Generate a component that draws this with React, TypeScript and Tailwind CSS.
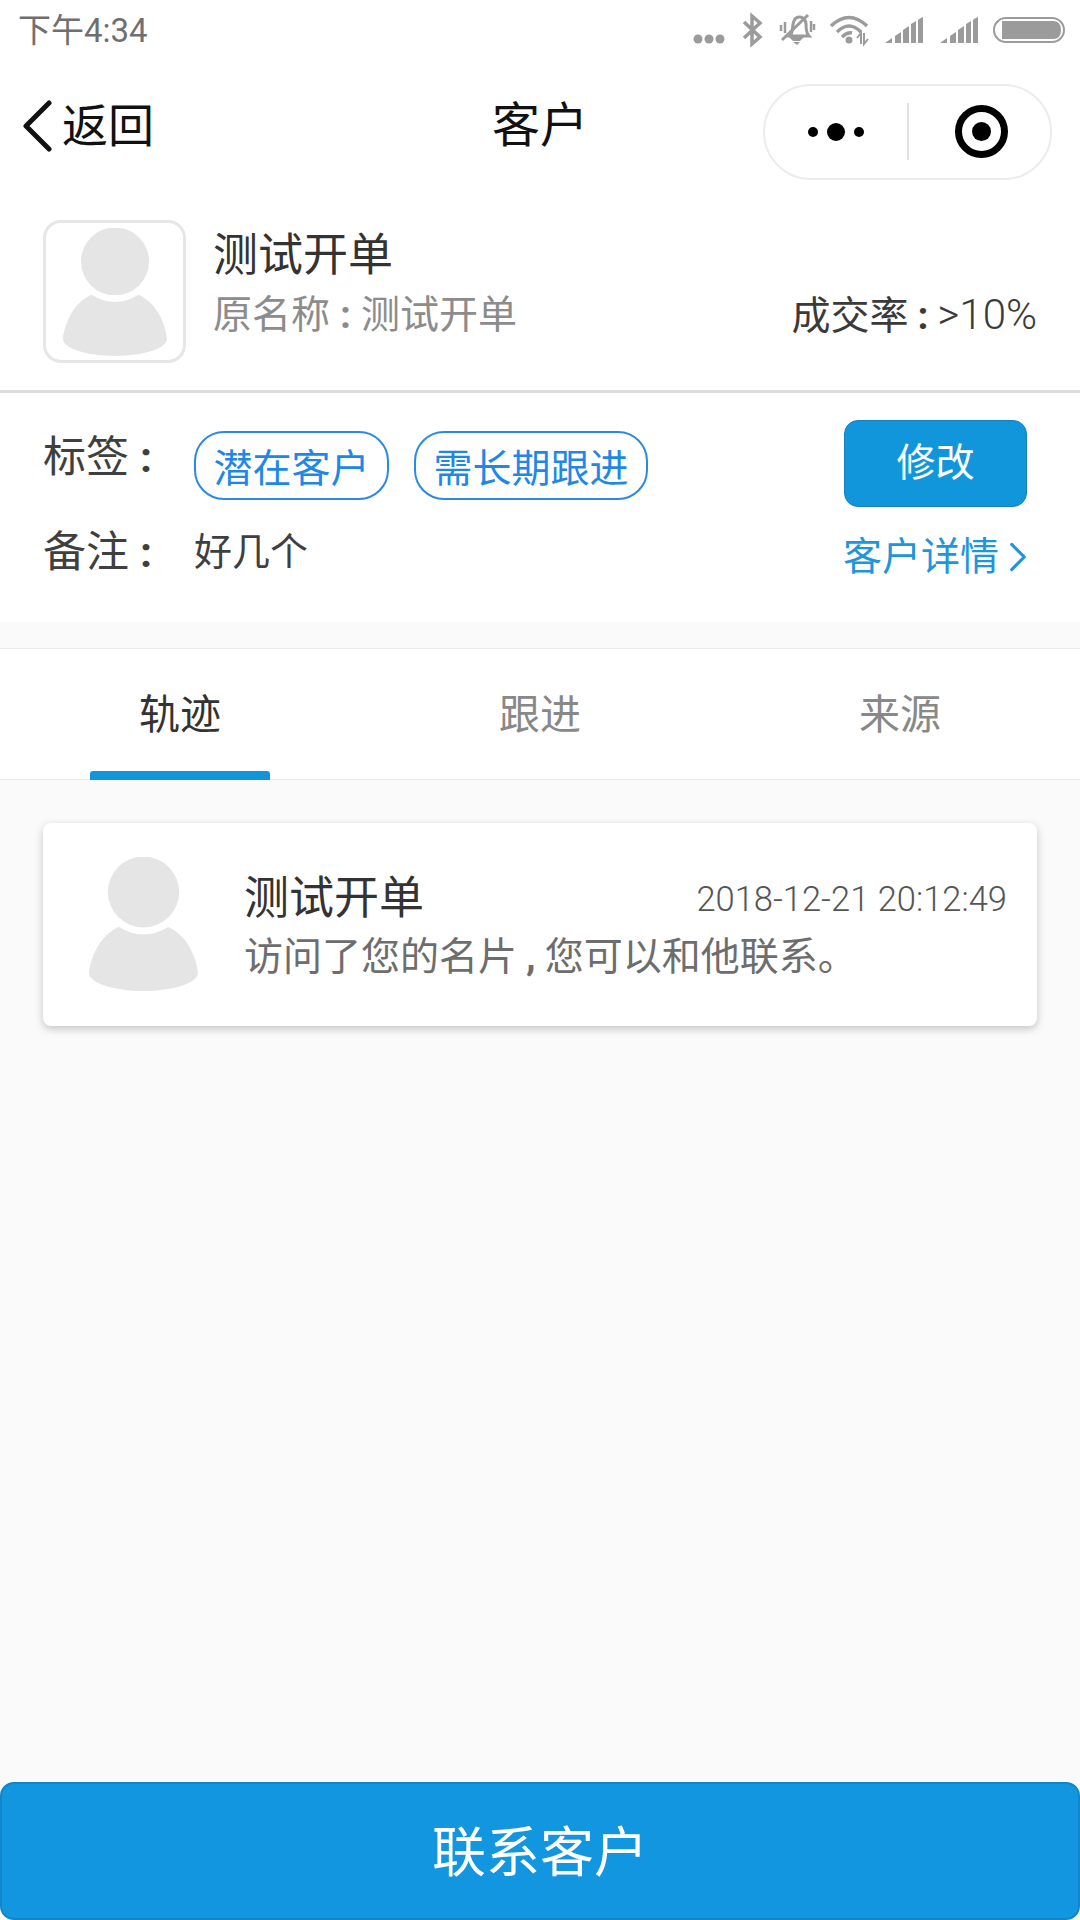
const FONT = "font-['Roboto','Noto_Sans_CJK_SC',sans-serif]";

const PersonIcon = ({ className }: { className: string }) => (
  <svg viewBox="0 0 110 134" preserveAspectRatio="none" className={className} fill="#e5e5e5">
    <ellipse cx="55" cy="35" rx="36" ry="35.5" />
    <path d="M30 70 Q55 85 80 70 C98 78 108 98 110 116 C110 126 85 134 55 134 C25 134 0 126 0 116 C2 98 12 78 30 70 Z" />
  </svg>
);

const SignalBars = ({ x }: { x: number }) => (
  <g transform={`translate(${x} 0)`} fill="#9b9b9b">
    <path d="M0 43 L7 38 V43 Z M10 43 V36 L16 32 V43 Z M18 43 V30 L24 26 V43 Z M26 43 V24 L31 21 V43 Z M33 43 V20 Q35 18 38 17 V43 Z" />
  </g>
);

const StatusBar = () => (
  <div className="flex h-[60px] items-center justify-between pl-[18px] pr-[14px] text-[#6f6f6f]">
    <span className="text-[33px] leading-none">下午4:34</span>
    <svg viewBox="692 0 374 60" className="h-[60px] w-[374px]" fill="#9b9b9b">
      <circle cx="698" cy="39" r="4.5" />
      <circle cx="708" cy="39" r="4.5" transform="translate(1 0)" />
      <circle cx="720" cy="39" r="4.5" />
      <path d="M744 22 L760 37 L752 44 V16 L760 23 L744 38" fill="none" stroke="#9b9b9b" strokeWidth="3.5" />
      <path d="M790 36 C794 32 791 22 796 18 C801 15 806 19 806 24 C806 30 807 34 809 36 Z" fill="none" stroke="#9b9b9b" strokeWidth="3" />
      <path d="M789 37 H804 L800 41 H793 Z M793 42 H800 L797 45 Z" />
      <path d="M782 40 L808 15" stroke="#9b9b9b" strokeWidth="3" />
      <path d="M785 22 V33 M781 25 V31 M811 21 V32 M814 24 V30" stroke="#9b9b9b" strokeWidth="2.5" />
      <path d="M831 26 Q849 9 867 26 M837 32 Q849 20 861 32 M842 37 Q847 32 852 33" fill="none" stroke="#9b9b9b" strokeWidth="3.5" />
      <circle cx="849" cy="40" r="3.5" />
      <path d="M861 44 V33 L857 38 M864 33 V44 L868 39" fill="none" stroke="#9b9b9b" strokeWidth="2" />
      <SignalBars x={885} />
      <SignalBars x={940} />
      <rect x="994" y="18" width="70" height="24" rx="12" fill="none" stroke="#9b9b9b" strokeWidth="2" />
      <path d="M1002 21 H1053 Q1061 21 1061 30 Q1061 39 1053 39 H1002 Z" />
    </svg>
  </div>
);

const NavBar = () => (
  <div className="relative flex h-[132px] items-center justify-between pl-[22px] pr-[28px]">
    <div className="flex items-center text-[#111]">
      <svg viewBox="0 0 30 52" className="h-[52px] w-[30px]" fill="none" stroke="#111" strokeWidth="5" strokeLinecap="round" strokeLinejoin="round">
        <path d="M27 3 L4 26 L27 49" />
      </svg>
      <span className="ml-[10px] text-[46px] leading-none">返回</span>
    </div>
    <span className="absolute left-1/2 -translate-x-1/2 text-[48px] leading-none text-[#111]">客户</span>
    <div className="mt-[11px] flex h-[96px] w-[289px] items-center rounded-full border-2 border-[#ececec]">
      <div className="flex w-[142px] items-center justify-center gap-[9px]">
        <span className="h-[10px] w-[10px] rounded-full bg-black" />
        <span className="h-[18px] w-[18px] rounded-full bg-black" />
        <span className="h-[10px] w-[10px] rounded-full bg-black" />
      </div>
      <div className="h-[57px] w-[2px] bg-[#e2e2e2]" />
      <div className="flex flex-1 items-center justify-center pl-[3px]">
        <div className="flex h-[53px] w-[53px] items-center justify-center rounded-full border-[7px] border-black">
          <span className="h-[19px] w-[19px] rounded-full bg-black" />
        </div>
      </div>
    </div>
  </div>
);

const Profile = () => (
  <div className="flex h-[201px] items-start border-b-[3px] border-[#dcdcdc] pl-[43px] pr-[43px] pt-[28px]">
    <div className="flex h-[143px] w-[143px] items-center justify-center rounded-[18px] border-[3px] border-[#e6e6e6]">
      <PersonIcon className="h-[128px] w-[104px]" />
    </div>
    <div className="ml-[27px] flex-1 pt-[8px]">
      <div className="text-[45px] leading-[56px] text-[#333]">测试开单</div>
      <div className="mt-[9px] text-[39px] leading-[44px] text-[#8c8c8c]">
        原名称<span className="mx-[10px] font-bold">:</span>测试开单
      </div>
    </div>
    <div className="self-start pt-[73px] text-[39px] leading-[44px] text-[#3a3a3a]">
      成交率<span className="mx-[9px] font-bold">:</span><span className="text-[42px] font-light">&gt;10%</span>
    </div>
  </div>
);

const Tag = ({ label, w }: { label: string; w: string }) => (
  <span className={`flex h-[69px] items-center justify-center rounded-[30px] border-2 border-[#2a8ae0] pt-[8px] text-[39px] leading-none text-[#1f88e5] ${w}`}>
    {label}
  </span>
);

const InfoSection = () => (
  <div className="flex h-[229px] justify-between pl-[43px] pr-[53px] pt-[28px]">
    <div>
      <div className="flex items-start">
        <span className="w-[151px] pt-[11px] text-[43px] leading-[50px] text-[#3f3f3f]">
          标签<span className="ml-[11px] font-bold">:</span>
        </span>
        <div className="mt-[4px] flex gap-[25px] pt-[6px]">
          <Tag label="潜在客户" w="w-[195px]" />
          <Tag label="需长期跟进" w="w-[234px]" />
        </div>
      </div>
      <div className="mt-[27px] flex items-center">
        <span className="w-[151px] text-[43px] leading-[50px] text-[#3f3f3f]">
          备注<span className="ml-[11px] font-bold">:</span>
        </span>
        <span className="text-[38px] leading-[50px] text-[#3f3f3f]">好几个</span>
      </div>
    </div>
    <div className="flex flex-col items-end">
      <button className="-mt-px h-[87px] w-[183px] rounded-[14px] border border-[#1a7fbd] bg-[#1296db] text-[39px] leading-none text-white">修改</button>
      <div className="mt-[27px] flex items-center text-[#1e96d9]">
        <span className="text-[39px] leading-[46px]">客户详情</span>
        <svg viewBox="0 0 20 34" className="ml-[10px] h-[32px] w-[18px]" fill="none" stroke="#1e96d9" strokeWidth="3.5" strokeLinecap="round" strokeLinejoin="round">
          <path d="M3 3 L17 17 L3 31" />
        </svg>
      </div>
    </div>
  </div>
);

const Tabs = () => (
  <div className="mt-[26px] grid h-[132px] grid-cols-3 border-y border-[#ededed] bg-white">
    <div className="relative flex items-center justify-center pt-[3px] text-[41px] text-[#333]">
      轨迹
      <span className="absolute -bottom-px left-[90px] h-[9px] w-[180px] rounded-t-[3px] bg-[#1296db]" />
    </div>
    <div className="flex items-center justify-center pt-[3px] text-[41px] text-[#888]">跟进</div>
    <div className="flex items-center justify-center pt-[3px] text-[41px] text-[#888]">来源</div>
  </div>
);

const TrackCard = () => (
  <div className="mx-[43px] mt-[43px] flex h-[203px] rounded-[8px] bg-white pl-[46px] pr-[30px] pt-[34px] shadow-[0_3px_8px_rgba(0,0,0,0.22)]">
    <PersonIcon className="h-[134px] w-[109px] shrink-0" />
    <div className="ml-[46px] flex-1 pt-[14px]">
      <div className="flex items-center justify-between">
        <span className="text-[45px] leading-[56px] text-[#333]">测试开单</span>
        <span className="text-[34.5px] font-light leading-[56px] text-[#555]">2018-12-21 20:12:49</span>
      </div>
      <div className="mt-[8px] text-[39px] leading-[44px] text-[#6d6d6d]">
        访问了您的名片<span className="mx-[9px] font-bold">,</span>您可以和他联系。
      </div>
    </div>
  </div>
);

export default function App() {
  return (
    <div className={`flex h-[1920px] w-[1080px] flex-col overflow-hidden bg-[#fafafa] ${FONT}`}>
      <div className="bg-white">
        <StatusBar />
        <NavBar />
        <Profile />
        <InfoSection />
      </div>
      <Tabs />
      <TrackCard />
      <button className="mt-auto h-[138px] w-full rounded-[14px] border-2 border-[#1285c9] bg-[#1296e0] pt-[6px] text-[54px] leading-none text-white">
        联系客户
      </button>
    </div>
  );
}
